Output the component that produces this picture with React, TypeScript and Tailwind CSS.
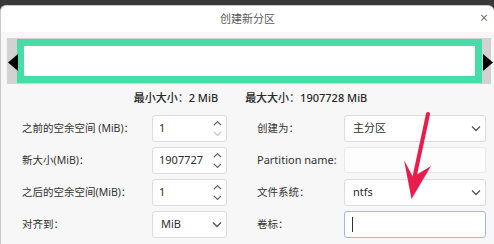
import React from 'react';

const font = { fontFamily: '"Noto Sans", "Noto Sans CJK SC", sans-serif' };

function ChevronUp({ dim }: { dim?: boolean }) {
  return (
    <svg width="9" height="6" viewBox="0 0 9 6" className={dim ? 'text-[#c4c4c4]' : 'text-[#6a6a6a]'}>
      <path d="M1 5 L4.5 1.5 L8 5" fill="none" stroke="currentColor" strokeWidth="1.2" />
    </svg>
  );
}

function ChevronDown({ dim }: { dim?: boolean }) {
  return (
    <svg width="9" height="6" viewBox="0 0 9 6" className={dim ? 'text-[#c4c4c4]' : 'text-[#6a6a6a]'}>
      <path d="M1 1 L4.5 4.5 L8 1" fill="none" stroke="currentColor" strokeWidth="1.2" />
    </svg>
  );
}

function SpinBox({ value, downDim }: { value: string; downDim?: boolean }) {
  return (
    <div className="h-[27px] bg-white border border-[#dcdcdc] rounded-[3px] flex items-center pl-[6px] pr-[4px]">
      <span className="flex-1 text-[11px] text-[#2e2e2e]">{value}</span>
      <div className="flex flex-col gap-[5px]">
        <ChevronUp />
        <ChevronDown dim={downDim} />
      </div>
    </div>
  );
}

function Select({ value }: { value: string }) {
  return (
    <div className="h-[27px] bg-white border border-[#dcdcdc] rounded-[3px] flex items-center pl-[8px] pr-[4px]">
      <span className="flex-1 text-[11px] text-[#2e2e2e]">{value}</span>
      <svg width="10" height="7" viewBox="0 0 10 7" className="text-[#555]">
        <path d="M1 1.5 L5 5.5 L9 1.5" fill="none" stroke="currentColor" strokeWidth="1.3" />
      </svg>
    </div>
  );
}

function Label({ children }: { children: React.ReactNode }) {
  return <div className="text-[10.5px] text-[#333] flex items-center h-[27px]">{children}</div>;
}

export default function App() {
  return (
    <div className="w-[494px] h-[244px] bg-[#3a3a3a] overflow-hidden relative" style={font}>
      <div className="mt-[5px] h-[239px] bg-[#f7f7f7] rounded-t-[6px] border-l border-t border-[#c9c9c9]">
        {/* title bar */}
        <div className="h-[26px] bg-white rounded-t-[6px] flex items-center justify-center relative">
          <span className="text-[11px] text-[#5a5a5a]">创建新分区</span>
          <span className="absolute right-[6px] top-[5px] text-[14px] leading-none text-[#777]">×</span>
        </div>

        {/* partition bar */}
        <div className="mt-[6px] ml-[6px] mr-[3px] h-[46px] bg-[#d2d2d2] flex items-center relative">
          <div className="ml-[10px] mr-[9px] flex-1 h-[44px] border-[7px] border-[#45dea6] bg-white" />
          <svg width="10" height="17" viewBox="0 0 10 17" className="absolute left-[1px] top-[16px]">
            <path d="M10 0 L0 8.5 L10 17 Z" fill="#000" />
          </svg>
          <svg width="10" height="17" viewBox="0 0 10 17" className="absolute right-[-2px] top-[16px]">
            <path d="M0 0 L10 8.5 L0 17 Z" fill="#000" />
          </svg>
        </div>

        {/* size info */}
        <div className="flex justify-center gap-[27px] pl-[6px] mt-[6px] h-[16px] items-center text-[11px] text-[#2a2a2a] font-medium">
          <span>最小大小：2 MiB</span>
          <span>最大大小：1907728 MiB</span>
        </div>

        {/* fields */}
        <div className="mt-[9px] ml-[21px] grid grid-cols-[130px_75px_30px_87px_142px] gap-y-[5px]">
          <Label>之前的空余空间 (MiB)：</Label>
          <SpinBox value="1" downDim />
          <div />
          <Label>创建为：</Label>
          <Select value="主分区" />

          <Label>新大小(MiB)：</Label>
          <SpinBox value="1907727" />
          <div />
          <Label>
            <span className="text-[11px]">Partition name:</span>
          </Label>
          <div className="h-[26px] bg-[#fdfdfd] border border-[#e8e8e8] rounded-[3px]" />

          <Label>之后的空余空间(MiB)：</Label>
          <SpinBox value="1" />
          <div />
          <Label>文件系统：</Label>
          <Select value="ntfs" />

          <Label>对齐到：</Label>
          <Select value="MiB" />
          <div />
          <Label>卷标：</Label>
          <div className="h-[27px] bg-white border border-[#9fbddb] rounded-[3px] flex items-center pl-[7px]">
            <div className="w-[1px] h-[15px] bg-[#333]" />
          </div>
        </div>
      </div>

      {/* red annotation arrow */}
      <svg width="494" height="244" className="absolute left-0 top-0 pointer-events-none">
        <path d="M428 114 L413 184" stroke="#ea1c4c" strokeWidth="4" strokeLinecap="round" />
        <path d="M411.5 199 L404 160 L413 177 L431 166 Z" fill="#ea1c4c" />
      </svg>
    </div>
  );
}
